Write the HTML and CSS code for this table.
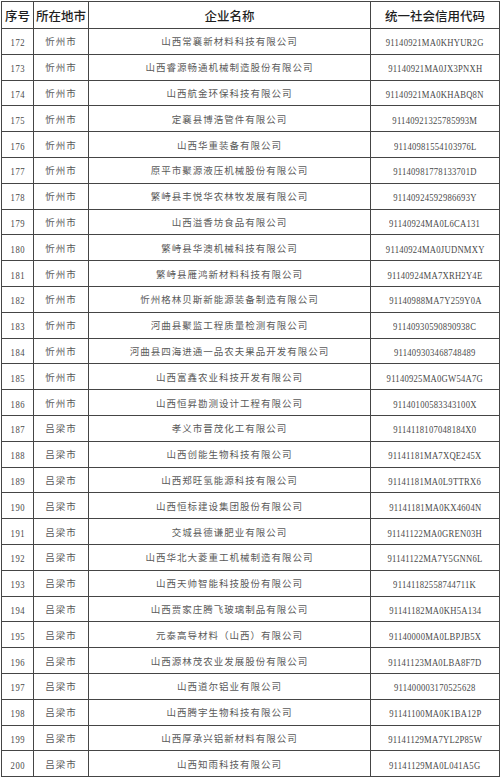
FILE: index.html
```html
<!DOCTYPE html>
<html lang="zh">
<head>
<meta charset="utf-8">
<link rel="stylesheet" href="styles.css">
</head>
<body>
<table class="list">
<colgroup><col class="c1"><col class="c2"><col class="c3"><col class="c4"></colgroup>
<thead>
<tr><th>序号</th><th>所在地市</th><th>企业名称</th><th>统一社会信用代码</th></tr>
</thead>
<tbody>
<tr><td class="no"><span>172</span></td><td class="zh">忻州市</td><td class="zh">山西常襄新材料科技有限公司</td><td class="code"><span>91140921MA0KHYUR2G</span></td></tr>
<tr><td class="no"><span>173</span></td><td class="zh">忻州市</td><td class="zh">山西睿源畅通机械制造股份有限公司</td><td class="code"><span>91140921MA0JX3PNXH</span></td></tr>
<tr><td class="no"><span>174</span></td><td class="zh">忻州市</td><td class="zh">山西航金环保科技有限公司</td><td class="code"><span>91140921MA0KHABQ8N</span></td></tr>
<tr><td class="no"><span>175</span></td><td class="zh">忻州市</td><td class="zh">定襄县博浩管件有限公司</td><td class="code"><span>91140921325785993M</span></td></tr>
<tr><td class="no"><span>176</span></td><td class="zh">忻州市</td><td class="zh">山西华重装备有限公司</td><td class="code"><span>91140981554103976L</span></td></tr>
<tr><td class="no"><span>177</span></td><td class="zh">忻州市</td><td class="zh">原平市聚源液压机械股份有限公司</td><td class="code"><span>91140981778133701D</span></td></tr>
<tr><td class="no"><span>178</span></td><td class="zh">忻州市</td><td class="zh">繁峙县丰悦华农林牧发展有限公司</td><td class="code"><span>91140924592986693Y</span></td></tr>
<tr><td class="no"><span>179</span></td><td class="zh">忻州市</td><td class="zh">山西溢香坊食品有限公司</td><td class="code"><span>91140924MA0L6CA131</span></td></tr>
<tr><td class="no"><span>180</span></td><td class="zh">忻州市</td><td class="zh">繁峙县华澳机械科技有限公司</td><td class="code"><span>91140924MA0JUDNMXY</span></td></tr>
<tr><td class="no"><span>181</span></td><td class="zh">忻州市</td><td class="zh">繁峙县雁鸿新材料科技有限公司</td><td class="code"><span>91140924MA7XRH2Y4E</span></td></tr>
<tr><td class="no"><span>182</span></td><td class="zh">忻州市</td><td class="zh">忻州格林贝斯新能源装备制造有限公司</td><td class="code"><span>91140988MA7Y259Y0A</span></td></tr>
<tr><td class="no"><span>183</span></td><td class="zh">忻州市</td><td class="zh">河曲县聚监工程质量检测有限公司</td><td class="code"><span>91140930590890938C</span></td></tr>
<tr><td class="no"><span>184</span></td><td class="zh">忻州市</td><td class="zh">河曲县四海进通一品农夫果品开发有限公司</td><td class="code"><span>911409303468748489</span></td></tr>
<tr><td class="no"><span>185</span></td><td class="zh">忻州市</td><td class="zh">山西富鑫农业科技开发有限公司</td><td class="code"><span>91140925MA0GW54A7G</span></td></tr>
<tr><td class="no"><span>186</span></td><td class="zh">忻州市</td><td class="zh">山西恒昇勘测设计工程有限公司</td><td class="code"><span>91140100583343100X</span></td></tr>
<tr><td class="no"><span>187</span></td><td class="zh">吕梁市</td><td class="zh">孝义市晋茂化工有限公司</td><td class="code"><span>9114118107048184X0</span></td></tr>
<tr><td class="no"><span>188</span></td><td class="zh">吕梁市</td><td class="zh">山西创能生物科技有限公司</td><td class="code"><span>91141181MA7XQE245X</span></td></tr>
<tr><td class="no"><span>189</span></td><td class="zh">吕梁市</td><td class="zh">山西郑旺氢能源科技有限公司</td><td class="code"><span>91141181MA0L9TTRX6</span></td></tr>
<tr><td class="no"><span>190</span></td><td class="zh">吕梁市</td><td class="zh">山西恒标建设集团股份有限公司</td><td class="code"><span>91141181MA0KX4604N</span></td></tr>
<tr><td class="no"><span>191</span></td><td class="zh">吕梁市</td><td class="zh">交城县德谦肥业有限公司</td><td class="code"><span>91141122MA0GREN03H</span></td></tr>
<tr><td class="no"><span>192</span></td><td class="zh">吕梁市</td><td class="zh">山西华北大菱重工机械制造有限公司</td><td class="code"><span>91141122MA7Y5GNN6L</span></td></tr>
<tr><td class="no"><span>193</span></td><td class="zh">吕梁市</td><td class="zh">山西天帅智能科技股份有限公司</td><td class="code"><span>91141182558744711K</span></td></tr>
<tr><td class="no"><span>194</span></td><td class="zh">吕梁市</td><td class="zh">山西贾家庄腾飞玻璃制品有限公司</td><td class="code"><span>91141182MA0KH5A134</span></td></tr>
<tr><td class="no"><span>195</span></td><td class="zh">吕梁市</td><td class="zh">元泰高导材料（山西）有限公司</td><td class="code"><span>91140000MA0LBPJB5X</span></td></tr>
<tr><td class="no"><span>196</span></td><td class="zh">吕梁市</td><td class="zh">山西源林茂农业发展股份有限公司</td><td class="code"><span>91141123MA0LBA8F7D</span></td></tr>
<tr><td class="no"><span>197</span></td><td class="zh">吕梁市</td><td class="zh">山西道尔铝业有限公司</td><td class="code"><span>911400003170525628</span></td></tr>
<tr><td class="no"><span>198</span></td><td class="zh">吕梁市</td><td class="zh">山西腾宇生物科技有限公司</td><td class="code"><span>91141100MA0K1BA12P</span></td></tr>
<tr><td class="no"><span>199</span></td><td class="zh">吕梁市</td><td class="zh">山西厚承兴铝新材料有限公司</td><td class="code"><span>91141129MA7YL2P85W</span></td></tr>
<tr><td class="no"><span>200</span></td><td class="zh">吕梁市</td><td class="zh">山西知雨科技有限公司</td><td class="code"><span>91141129MA0L041A5G</span></td></tr>
</tbody>
</table>
</body>
</html>
```

FILE: styles.css
```css
html, body {
  margin: 0;
  padding: 0;
  background: #ffffff;
}
.list {
  margin: 1px 0 0 1px;
  width: 498px;
  border-collapse: collapse;
  table-layout: fixed;
}
.c1 { width: 32px; }
.c2 { width: 55px; }
.c3 { width: 282px; }
.c4 { width: 129px; }
.list th, .list td {
  border: 1.5px solid #454545;
  padding: 0;
  text-align: center;
  vertical-align: middle;
  white-space: nowrap;
  overflow: hidden;
}
.list th {
  height: 26px;
  font-family: "Noto Sans CJK SC", sans-serif;
  font-size: 12.5px;
  font-weight: 500;
  color: #1e1e1e;
}
.list td {
  height: 24.8px;
}
.zh {
  font-family: "Noto Sans CJK SC", sans-serif;
  font-size: 9.5px;
  letter-spacing: 1px;
  color: #5a5a5a;
}
.no span, .code span {
  display: inline-block;
  font-family: "Liberation Serif", serif;
  font-size: 10.5px;
  color: #4a4a4a;
  transform: scaleX(0.82);
}
.no span {
  letter-spacing: 0.6px;
}
.code span {
  letter-spacing: 0.3px;
}
```
